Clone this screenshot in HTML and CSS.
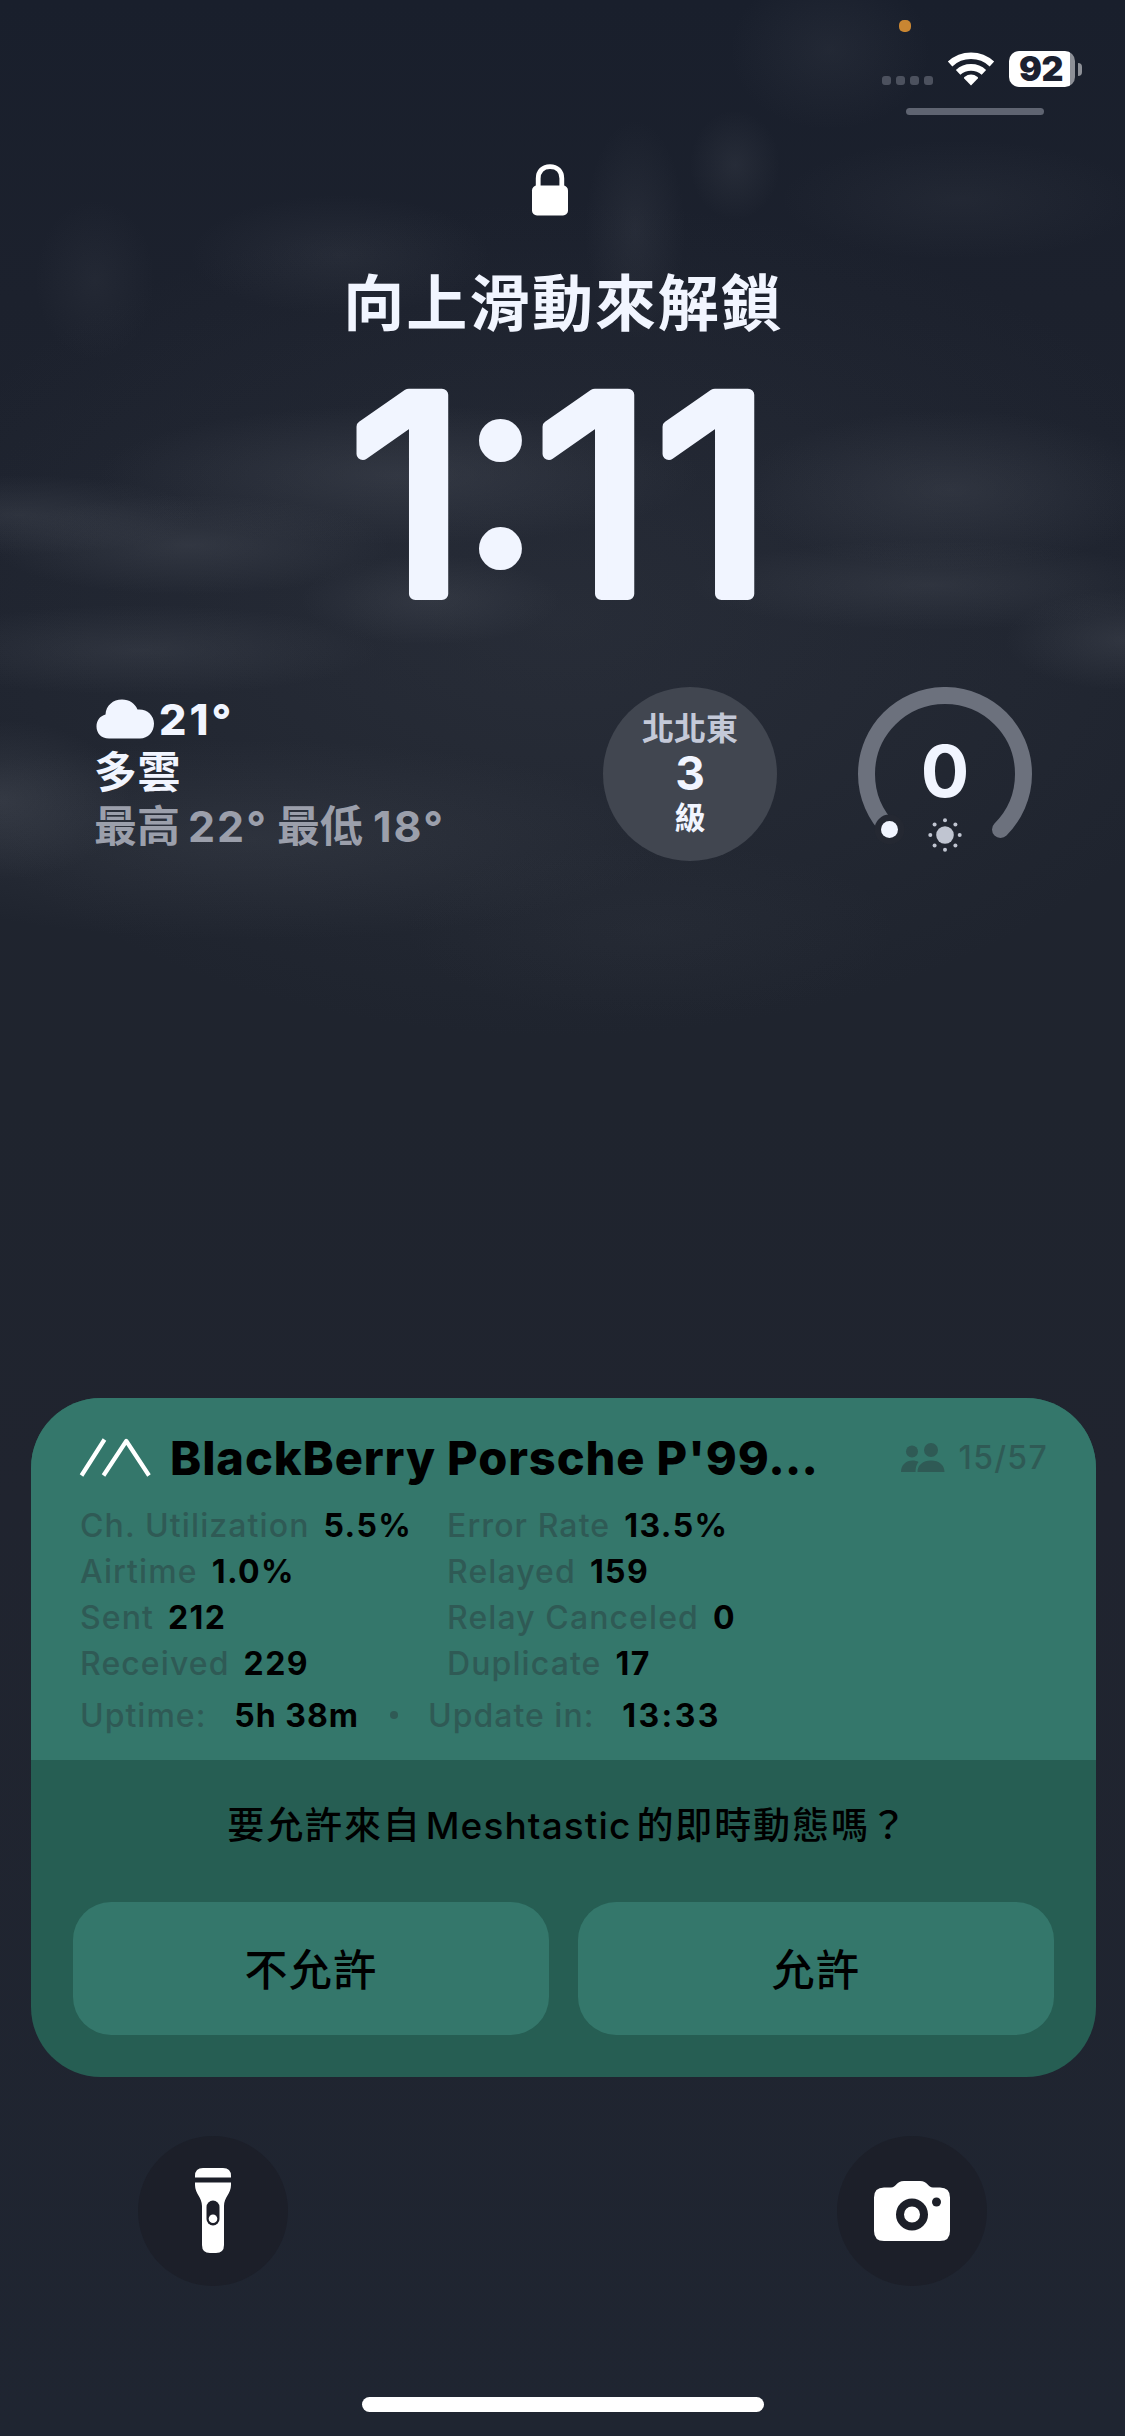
FILE: index.html
```html
<!DOCTYPE html>
<html lang="zh-Hant">
<head>
<meta charset="utf-8">
<title>Lock Screen</title>
<link rel="stylesheet" href="styles.css">
</head>
<body>
<main class="screen">
  <header class="status">
    <span class="mic-dot"></span>
    <div class="status-icons">
      <div class="cell"><i></i><i></i><i></i><i></i></div>
      <svg class="wifi" width="48" height="35" viewBox="0 0 48 35">
        <g fill="none" stroke="#fff">
          <path stroke-width="6.6" d="M3.1 13 A30.7 30.7 0 0 1 44.9 13"/>
          <path stroke-width="6.6" d="M11.1 21.4 A19 19 0 0 1 36.9 21.4"/>
        </g>
        <path fill="#fff" d="M24 34.4 L17.2 27.4 Q16.6 26.6 17.4 26 Q24 21.2 30.6 26 Q31.4 26.6 30.8 27.4 Z"/>
      </svg>
      <div class="battery"><span class="battery-level">92</span></div>
      <span class="battery-cap"></span>
    </div>
    <span class="status-bar-line"></span>
  </header>

  <svg class="lock" width="38" height="52" viewBox="0 0 38 52">
    <path d="M7.2 24 V14.5 C7.2 7 12 2.6 19 2.6 C26 2.6 30.8 7 30.8 14.5 V24" fill="none" stroke="#fff" stroke-width="4.8"/>
    <rect x="1" y="21.5" width="36" height="30" rx="5" fill="#fff"/>
  </svg>
  <p class="hint">向上滑動來解鎖</p>
  <svg class="clock" width="1125" height="360" viewBox="0 -30 1125 360">
    <text class="digit" transform="scale(1.06 1)" x="329.5 505 618.200" y="253">111</text>
    <text class="colon" x="467" y="216">:</text>
  </svg>

  <section class="widgets">
    <div class="weather">
      <div class="weather-now">
        <svg width="60" height="42" viewBox="0 0 60 42"><path fill="#f1f5ff" d="M14 40.500 C6 40.500 1.500 35 1.500 28.500 C1.500 22.500 5 18 10.500 16.500 C11 7.500 18 1.500 27 1.500 C34.500 1.500 40 5.500 42.500 11.500 C51.500 10.500 59 17 59 25.500 C59 34 53 40.500 45 40.500 Z"/></svg>
        <span class="temp">21°</span>
      </div>
      <div class="weather-text">多雲</div>
      <div class="weather-range"><span>最高</span><span class="num">22°</span><span class="low">最低</span><span class="num">18°</span></div>
    </div>
    <div class="wind"><span class="dir">北北東</span><span class="speed">3</span><span class="unit">級</span></div>
    <div class="uv">
      <svg width="174" height="174" viewBox="0 0 174 174">
        <path d="M31.500 142.500 A78.500 78.500 0 1 1 142.500 142.500" fill="none" stroke="#6c717d" stroke-width="17" stroke-linecap="round"/>
        <circle cx="31.500" cy="142.500" r="15" fill="#242832"/>
        <circle cx="31.500" cy="142.500" r="8.500" fill="#f1f5ff"/>
        <g fill="#c0c5d1"><circle cx="87" cy="148" r="8.800"/>
        <circle cx="87" cy="133.300" r="2"/><circle cx="87" cy="162.700" r="2"/><circle cx="72.300" cy="148" r="2"/><circle cx="101.700" cy="148" r="2"/><circle cx="76.600" cy="137.600" r="2"/><circle cx="97.400" cy="137.600" r="2"/><circle cx="76.600" cy="158.400" r="2"/><circle cx="97.400" cy="158.400" r="2"/></g>
      </svg>
      <span class="uv-value">0</span>
    </div>
  </section>

  <article class="card">
    <div class="activity">
      <div class="activity-head">
        <svg class="mesh" width="72" height="42" viewBox="0 0 72 42"><path d="M2.500 38.500 L25.500 2.500 M24.500 38.500 L47.300 4 L70 38.500" fill="none" stroke="#fff" stroke-width="4.200" stroke-linejoin="round"/></svg>
        <h1 class="title">BlackBerry Porsche P'99…</h1>
        <div class="nodes">
          <svg width="45" height="31" viewBox="0 0 45 31"><circle cx="12" cy="9.500" r="6"/><circle cx="31" cy="8" r="7"/><path d="M1 30 C1 23 6 18.500 12.500 18.500 C15 18.500 17 19 18.500 20 C16.500 22.500 15.500 25.500 15.500 30 Z M17.500 30 C17.500 23 23 18.500 31 18.500 C39 18.500 44.500 23 44.500 30 Z"/></svg>
          <span>15/57</span>
        </div>
      </div>
      <dl class="stats">
        <div><dt>Ch. Utilization</dt><dd>5.5%</dd></div>
        <div><dt>Error Rate</dt><dd>13.5%</dd></div>
        <div><dt>Airtime</dt><dd>1.0%</dd></div>
        <div><dt>Relayed</dt><dd>159</dd></div>
        <div><dt>Sent</dt><dd>212</dd></div>
        <div><dt>Relay Canceled</dt><dd>0</dd></div>
        <div><dt>Received</dt><dd>229</dd></div>
        <div><dt>Duplicate</dt><dd>17</dd></div>
      </dl>
      <div class="timing"><span class="key">Uptime:</span><b>5h 38m</b><i class="bullet"></i><span class="key">Update in:</span><b class="countdown">13:33</b></div>
    </div>
    <div class="prompt">
      <p class="question">要允許來自<span class="app">Meshtastic</span>的即時動態嗎？</p>
      <div class="actions"><button>不允許</button><button>允許</button></div>
    </div>
  </article>

  <nav class="shortcuts">
    <div class="round">
      <svg width="40" height="90" viewBox="0 0 40 90">
        <path fill="#fff" d="M2 11.500 V10 Q2 2 10 2 H30 Q38 2 38 10 V11.500 Z M2 16.500 H38 V19 C38 28 31 31 31 40 V79 Q31 87 23 87 H17 Q9 87 9 79 V40 C9 31 2 28 2 19 Z"/>
        <rect x="13.500" y="34.500" width="13" height="25" rx="6.500" fill="#1c1e28"/><circle cx="20" cy="52.800" r="4.300" fill="#fff"/>
      </svg>
    </div>
    <div class="round">
      <svg width="78" height="64" viewBox="0 0 78 64">
        <path fill="#fff" d="M11 8.500 H18 C23 8.500 23.500 2 31 2 H47 C54.500 2 55 8.500 60 8.500 H67 Q77 8.500 77 18.500 V52 Q77 62 67 62 H11 Q1 62 1 52 V18.500 Q1 8.500 11 8.500 Z"/>
        <circle cx="39" cy="35.500" r="12" fill="none" stroke="#1c1f28" stroke-width="8"/><circle cx="63.500" cy="23" r="4.500" fill="#1c1f28"/>
      </svg>
    </div>
  </nav>
  <span class="home-bar"></span>
</main>
</body>
</html>
```
FILE: styles.css
```css
* { box-sizing: border-box; margin: 0; padding: 0; }
body { background: #1f242f; }
.screen {
  width: 1125px; height: 2436px; overflow: hidden; display: flex; flex-direction: column;
  font-family: Inter, "Noto Sans CJK TC", sans-serif; color: #f1f5ff;
  background:
    radial-gradient(ellipse 130px 45px at 430px 600px, rgba(100,105,115,.2), transparent),
    radial-gradient(ellipse 200px 50px at 190px 545px, rgba(100,105,115,.24), transparent),
    radial-gradient(ellipse 180px 40px at 20px 515px, rgba(100,105,115,.22), transparent),
    radial-gradient(ellipse 300px 70px at 400px 475px, rgba(100,105,115,.24), transparent),
    radial-gradient(ellipse 210px 80px at 950px 490px, rgba(100,105,115,.22), transparent),
    radial-gradient(ellipse 240px 45px at 930px 585px, rgba(100,105,115,.2), transparent),
    radial-gradient(ellipse 45px 55px at 735px 165px, rgba(100,105,115,.16), transparent),
    radial-gradient(ellipse 50px 110px at 635px 230px, rgba(100,105,115,.15), transparent),
    radial-gradient(ellipse 150px 60px at 340px 255px, rgba(100,105,115,.14), transparent),
    radial-gradient(ellipse 60px 80px at 95px 280px, rgba(100,105,115,.1), transparent),
    radial-gradient(ellipse 100px 80px at 830px 50px, rgba(100,105,115,.12), transparent),
    radial-gradient(ellipse 180px 60px at 960px 200px, rgba(100,105,115,.1), transparent),
    radial-gradient(ellipse 130px 80px at 0 800px, rgba(100,105,115,.26), transparent),
    radial-gradient(ellipse 420px 100px at 250px 840px, rgba(100,105,115,.18), transparent),
    radial-gradient(ellipse 240px 45px at 140px 650px, rgba(100,105,115,.2), transparent),
    radial-gradient(ellipse 250px 90px at 650px 930px, rgba(100,105,115,.06), transparent),
    radial-gradient(ellipse 120px 50px at 1125px 640px, rgba(100,105,115,.24), transparent),
    radial-gradient(ellipse 700px 420px at 560px 620px, rgba(80,85,95,.18), transparent),
    linear-gradient(#191f2c, #1c212d 300px, #1f242f 700px, #1f242e 1100px, #20242f 1500px, #1f2531);
}
.status { height: 115px; padding: 20px 43px 0 0; display: flex; flex-direction: column; align-items: flex-end; flex: none; }
.mic-dot { width: 12px; height: 12px; border-radius: 5px; background: #c98632; margin-right: 171px; }
.status-icons { display: flex; margin-top: 19px; height: 36px; }
.cell { display: flex; gap: 5px; margin: 25px 14px 0 0; }
.cell i { width: 9px; height: 9px; border-radius: 3px; background: #4c515e; }
.wifi { margin-right: 14px; }
.battery { width: 66px; height: 36px; border-radius: 10px; background: linear-gradient(90deg, #fff 61px, #8d9097 61px); text-align: center; padding-right: 2px; }
.battery-level { font-weight: 900; font-size: 34px; line-height: 36px; color: #1b2130; letter-spacing: -.5px; }
.battery-cap { width: 4px; height: 13px; margin: 12px 0 0 3px; border-radius: 0 4px 4px 0; background: #8d9097; }
.status-bar-line { width: 138px; height: 7px; border-radius: 4px; background: #5f6471; margin: 21px 38px 0 0; }
.lock { margin: 49px 0 0 531px; flex: none; }
.hint { height: 80px; line-height: 80px; margin-top: 48px; text-align: center; font-size: 61px; font-weight: 700; letter-spacing: 1.9px; padding-left: 2px; flex: none; }
.clock { flex: none; display: block; margin: -33px 0 -30px; font-family: Inter, sans-serif; fill: #f1f5ff; stroke: #f1f5ff; stroke-linejoin: round; }
.digit { font-size: 274px; font-weight: 390; stroke-width: 12px; }
.colon { font-size: 242px; font-weight: 200; stroke-width: 24px; }
.widgets { display: flex; height: 174px; margin: 46px 93px 0 95px; flex: none; }
.weather { flex: 1; padding-top: 5px; font-weight: 700; font-size: 43px; line-height: 54px; white-space: nowrap; }
.weather-now { display: flex; align-items: center; gap: 4px; height: 53px; }
.temp { font-weight: 800; letter-spacing: 3px; }
.weather-text { margin-left: -1px; letter-spacing: .5px; }
.weather-range { display: flex; height: 54px; color: #9b9fab; margin-left: -1px; }
.num { margin-left: 8px; letter-spacing: 2px; font-weight: 700; }
.low { margin-left: 9px; }
.low + .num { margin-left: 10px; }
.wind { width: 174px; height: 174px; border-radius: 50%; background: #414650; display: flex; flex-direction: column; align-items: center; padding-top: 20px; }
.dir { font-size: 32px; line-height: 44px; font-weight: 700; color: #c4c9d8; }
.speed { font-size: 46px; line-height: 44px; font-weight: 700; }
.unit { font-size: 31px; line-height: 46px; font-weight: 700; }
.uv { position: relative; width: 174px; height: 174px; margin-left: 81px; }
.uv svg { display: block; }
.uv-value { position: absolute; inset: 39px 0 auto; text-align: center; font-size: 72px; line-height: 90px; font-weight: 680; }
.card { width: 1065px; height: 679px; margin: 537px 0 0 31px; border-radius: 70px; overflow: hidden; background: #265e53; color: #000; flex: none; }
.activity { height: 362px; padding: 33px 48px 0 48px; background: #34776b; }
.activity-head { display: flex; align-items: center; height: 54px; }
.mesh { margin-top: -1px; }
.title { font-size: 47px; line-height: 54px; font-weight: 800; letter-spacing: .9px; margin-left: 19px; flex: 1; white-space: nowrap; }
.nodes { display: flex; align-items: center; gap: 14px; font-size: 32px; font-weight: 500; letter-spacing: 1.3px; color: #2f5a55; margin-top: -2px; }
.nodes svg { fill: #2f5a55; }
.stats { display: grid; grid-template-columns: 367px 1fr; grid-auto-rows: 46px; margin: 18px 0 0 1px; font-size: 32px; line-height: 46px; white-space: nowrap; letter-spacing: 1.1px; }
.stats div { display: flex; }
dt, .key { color: #2f5a55; font-weight: 500; }
dt { margin-right: 14px; }
dd, b { font-weight: 650; }
dd { letter-spacing: 1.4px; }
.timing { display: flex; align-items: center; height: 46px; margin: 5px 0 0 1px; font-size: 32px; letter-spacing: 1px; }
.bullet { width: 8px; height: 8px; border-radius: 50%; background: #2f5a55; margin: 0 30px 0 31px; }
.timing b { margin-left: 28px; }
.timing .countdown { letter-spacing: 2.4px; }
.question { padding: 39px 0 0 9px; height: 142px; font-size: 37px; line-height: 54px; font-weight: 500; text-align: center; white-space: nowrap; letter-spacing: 1.9px; }
.app { margin: 0 5px 0 4px; letter-spacing: 1.1px; }
.actions { display: grid; grid-template-columns: 1fr 1fr; gap: 29px; padding: 0 42px; }
.actions button { height: 133px; border: 0; border-radius: 38px; padding-bottom: 3px; background: #34776b; color: #000; font: 500 43px Inter, "Noto Sans CJK TC", sans-serif; letter-spacing: 1.4px; }
.shortcuts { display: flex; justify-content: space-between; padding: 0 138px; margin-top: 59px; flex: none; }
.round { width: 150px; height: 150px; border-radius: 50%; background: #1c1f29; display: grid; place-items: center; }
.home-bar { width: 402px; height: 15px; border-radius: 8px; background: #fff; margin: 111px 0 0 362px; }
```
